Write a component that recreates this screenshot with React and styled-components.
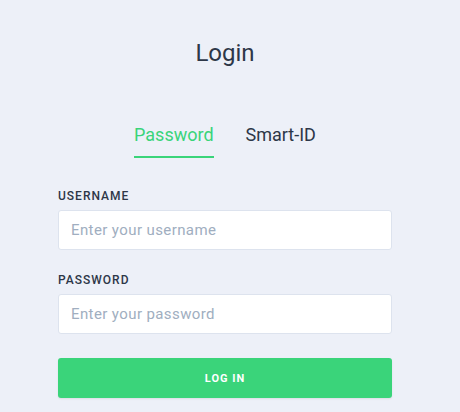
import React from "react";
import styled, { createGlobalStyle } from "styled-components";

const Global = createGlobalStyle`
  html, body { margin: 0; padding: 0; background: #edf0f8; }
  body { font-family: Roboto, "Noto Sans", sans-serif; }
  * { box-sizing: border-box; }
`;

const Page = styled.div`
  width: 460px;
  min-height: 412px;
  background: #edf0f8;
  display: flex;
  justify-content: flex-start;
`;

const Card = styled.div`
  width: 334px;
  margin-left: 58px;
  padding-top: 38px;
  display: flex;
  flex-direction: column;
`;

const Title = styled.h1`
  margin: 0;
  font-size: 24px;
  font-weight: 400;
  line-height: 30px;
  color: #2d3748;
  text-align: center;
`;

const Tabs = styled.div`
  display: flex;
  justify-content: center;
  gap: 32px;
  margin-top: 55px;
`;

const Tab = styled.button`
  border: 0;
  background: none;
  padding: 0 0 9px;
  font-family: inherit;
  font-size: 18px;
  line-height: 24px;
  color: ${(p) => (p.$active ? "#3ad47a" : "#2d3748")};
  border-bottom: 2px solid ${(p) => (p.$active ? "#3ad47a" : "transparent")};
  cursor: pointer;
`;

const Form = styled.form`
  display: flex;
  flex-direction: column;
  margin-top: 31px;
`;

const Field = styled.div`
  display: flex;
  flex-direction: column;
  gap: 7px;
  margin-bottom: 23px;
`;

const Label = styled.label`
  font-size: 12px;
  font-weight: 500;
  letter-spacing: 1px;
  line-height: 14px;
  color: #2d3748;
  text-transform: uppercase;
`;

const Input = styled.input`
  height: 40px;
  width: 100%;
  border: 1px solid #dde3ee;
  border-radius: 3px;
  background: #fff;
  padding: 0 12px;
  font-family: inherit;
  font-size: 15px;
  letter-spacing: 0.4px;
  color: #2d3748;
  outline: none;
  &::placeholder { color: #a0aec0; }
`;

const Button = styled.button`
  height: 40px;
  width: 100%;
  border: 0;
  border-radius: 3px;
  background: #3ad47a;
  color: #fff;
  font-family: inherit;
  font-size: 11px;
  font-weight: 700;
  letter-spacing: 1px;
  text-transform: uppercase;
  box-shadow: 0 1px 2px rgba(0,0,0,0.08);
  margin-top: 1px;
  cursor: pointer;
`;

export default function App() {
  return (
    <Page>
      <Global />
      <Card>
        <Title>Login</Title>
        <Tabs>
          <Tab $active>Password</Tab>
          <Tab>Smart-ID</Tab>
        </Tabs>
        <Form onSubmit={(e) => e.preventDefault()}>
          <Field>
            <Label>Username</Label>
            <Input placeholder="Enter your username" />
          </Field>
          <Field>
            <Label>Password</Label>
            <Input type="password" placeholder="Enter your password" />
          </Field>
          <Button type="submit">Log in</Button>
        </Form>
      </Card>
    </Page>
  );
}
